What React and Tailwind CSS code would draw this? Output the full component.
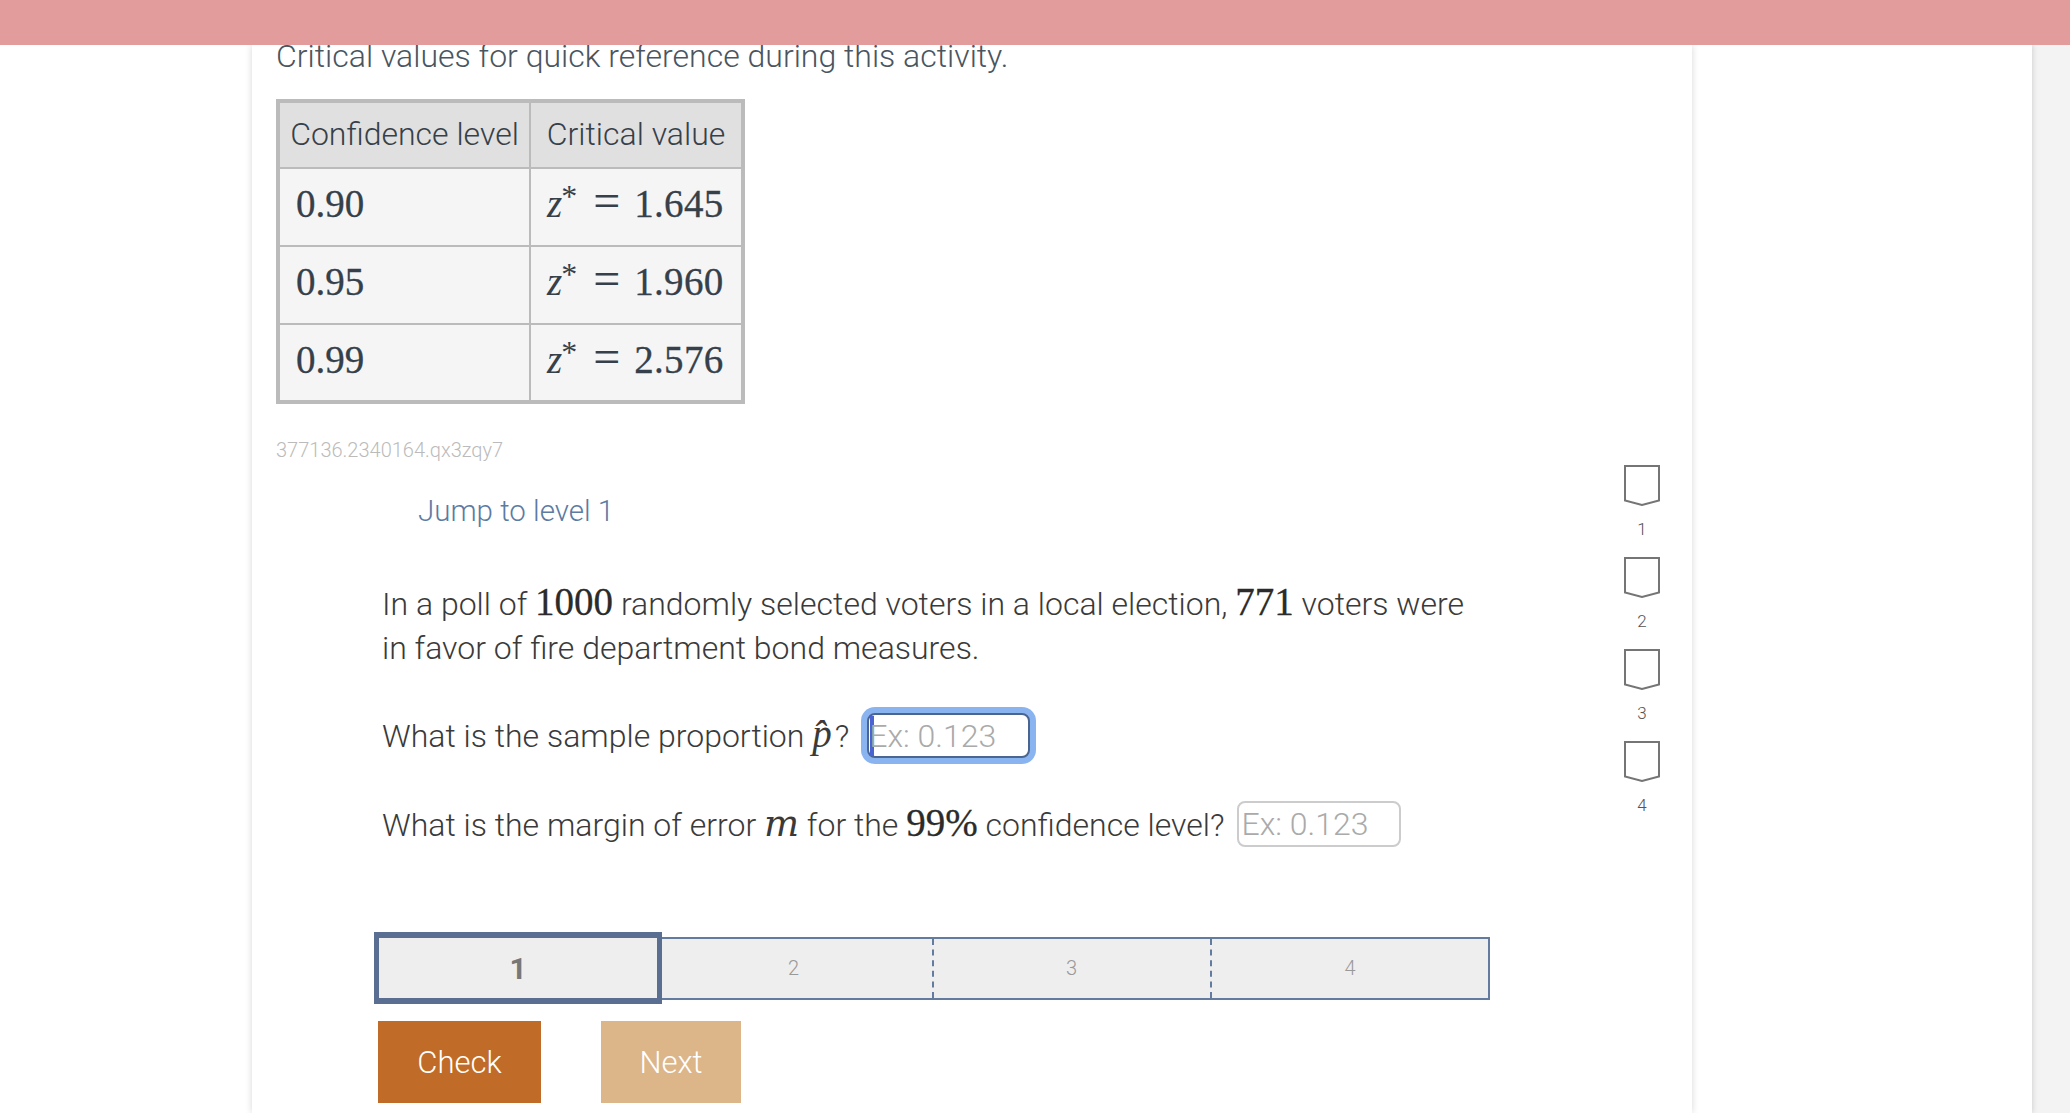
const roboto = "font-['Roboto',sans-serif] font-light";
const math = "font-['Liberation_Serif',serif]";

function Num({ children, className = "" }) {
  return <span className={`${math} text-[39px] font-normal [-webkit-text-stroke:0.3px_currentColor] ${className}`}>{children}</span>;
}

function Zval({ v }) {
  return (
    <span className={`${math} text-[39px] text-[#36404a] whitespace-nowrap flex items-baseline`}>
      <i>z</i>
      <span className="text-[32px] leading-[32px] relative top-[-10px] ml-[-1px]">*</span>
      <span className="text-[48px] leading-[39px] ml-[16px] mr-[14px] font-normal">=</span>
      <span className="tracking-[0.3px] [-webkit-text-stroke:0.3px_currentColor]">{v}</span>
    </span>
  );
}

function Shield({ n }) {
  return (
    <div className="flex flex-col items-center h-[92px]">
      <svg width="36" height="41" viewBox="0 0 36 41" fill="none">
        <path d="M1 1H35V35.5L18 40L1 35.5Z" stroke="#757575" strokeWidth="2" />
      </svg>
      <span className={`${roboto} text-[17px] leading-[20px] mt-[13px] text-[#555]`}>{n}</span>
    </div>
  );
}

function Row({ a, b }) {
  return (
    <tr className="h-[78px] bg-[#f5f5f5]">
      <td className="border-2 border-[#bbbbbb] pl-[16px] pb-[5px] text-[#36404a]"><Num>{a}</Num></td>
      <td className="border-2 border-[#bbbbbb] pl-[16px] pb-[5px]"><Zval v={b} /></td>
    </tr>
  );
}

export default function App() {
  return (
    <div className="w-[2070px] h-[1113px] overflow-hidden bg-[#f3f3f3] flex flex-col">
      <div className="h-[45px] shrink-0 bg-[#e29c9c] relative z-10" />
      <div className="flex-1 w-[2032px] bg-white pl-[252px] shadow-[0_0_6px_rgba(0,0,0,0.18)]">
        <div className={`w-[1440px] h-full bg-white shadow-[0_0_7px_rgba(0,0,0,0.16)] pl-[24px] relative flex ${roboto} text-[#36404a]`}>
          <div className="w-[1300px] flex flex-col">
            <p className="text-[32px] leading-[44px] mt-[-11px] text-[#4a5560]">Critical values for quick reference during this activity.</p>
            <table className="mt-[21px] w-[465px] border-collapse border-4 border-[#bbbbbb] table-fixed">
              <colgroup>
                <col className="w-[252px]" />
                <col className="w-[213px]" />
              </colgroup>
              <thead>
                <tr className="h-[67px] bg-[#e0e0e0] text-[32px] font-light">
                  <th className="border-2 border-[#bbbbbb] font-light text-center whitespace-nowrap pb-[2px]">Confidence level</th>
                  <th className="border-2 border-[#bbbbbb] font-light text-center whitespace-nowrap pb-[2px]">Critical value</th>
                </tr>
              </thead>
              <tbody>
                <Row a="0.90" b="1.645" />
                <Row a="0.95" b="1.960" />
                <Row a="0.99" b="2.576" />
              </tbody>
            </table>
            <p className="text-[20px] leading-[28px] mt-[32px] text-[#bbbbbb]">377136.2340164.qx3zqy7</p>
            <p className="text-[29.5px] leading-[44px] mt-[25px] ml-[142px] text-[#5b7ba3]">Jump to level 1</p>
            <div className="ml-[106px] mt-[47px] text-[32px] leading-[44px] text-[#3a3a3a]">
              <p>In a poll of <Num className="text-[#2b2b2b]">1000</Num> randomly selected voters in a local election, <Num className="text-[#2b2b2b]">771</Num> voters were</p>
              <p>in favor of fire department bond measures.</p>
              <div className="flex items-center mt-[37px] h-[57px]">
                <span className="mt-[-2px]">What is the sample proportion <span className={`${math} italic text-[39px] mr-[3px]`}>p̂</span>?</span>
                <div className="ml-[12px] w-[175px] h-[57px] rounded-[14px] bg-[#8ab4f0] p-[6px]">
                  <div className="w-full h-full rounded-[8px] border-2 border-[#4a6590] bg-white flex items-center pl-[1px]">
                    <span className="w-[4px] h-[40px] bg-[#4a63d0]" />
                    <span className="text-[#aaaaaa] font-light ml-[-5px]">Ex: 0.123</span>
                  </div>
                </div>
              </div>
              <div className="flex items-center mt-[37px] h-[46px]">
                <span className="whitespace-nowrap">What is the margin of error <span className="font-['DejaVu_Serif',serif] italic font-normal text-[37px] leading-[37px]">m</span> for the <Num className="text-[#2b2b2b]">99%</Num> confidence level?</span>
                <div className="ml-[13px] w-[164px] h-[46px] rounded-[8px] border-2 border-[#cccccc] bg-white flex items-center pl-[2px]">
                  <span className="text-[#aaaaaa] font-light">Ex: 0.123</span>
                </div>
              </div>
            </div>
            <div className="ml-[98px] mt-[85px] flex items-center h-[72px]">
              <div className="w-[288px] h-[72px] border-x-[5px] border-y-[6px] border-[#5a6e92] bg-[#eeeeee] flex items-center justify-center font-bold text-[30px] text-[#777777]">1</div>
              <div className="w-[828px] h-[63px] border-2 border-l-0 border-[#627b9f] bg-[#eeeeee] flex text-[20px] text-[#999999]">
                <div className="w-[272px] pr-[7px] flex items-center justify-center border-r-2 border-dashed border-[#627b9f]">2</div>
                <div className="w-[278px] pr-[1px] flex items-center justify-center border-r-2 border-dashed border-[#627b9f]">3</div>
                <div className="flex-1 flex items-center justify-center">4</div>
              </div>
            </div>
            <div className="ml-[102px] mt-[17px] flex gap-[60px] text-[31px] text-white">
              <div className="w-[163px] h-[82px] pt-[2px] bg-[#c06b27] flex items-center justify-center">Check</div>
              <div className="w-[140px] h-[82px] pt-[2px] bg-[#dcb588] flex items-center justify-center">Next</div>
            </div>
          </div>
          <div className="ml-[48px] mt-[420px] flex flex-col">
            <Shield n="1" /><Shield n="2" /><Shield n="3" /><Shield n="4" />
          </div>
        </div>
      </div>
    </div>
  );
}
